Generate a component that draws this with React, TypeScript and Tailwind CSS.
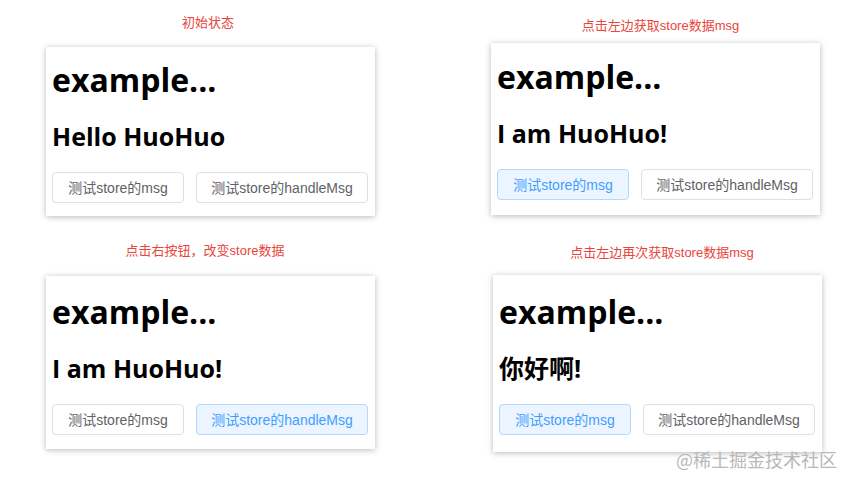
import React from "react";

type PanelProps = {
  label: string;
  msg: string;
  active?: "msg" | "handle";
  wrap: string;
  labelPad: string;
  cardGap: string;
  cardPad: string;
};

function Panel({ label, msg, active, wrap, labelPad, cardGap, cardPad }: PanelProps) {
  const base =
    "h-[31px] rounded-[4px] border text-[14px] leading-none flex items-center justify-center font-['Liberation_Sans','Noto_Sans_CJK_SC',sans-serif]";
  const idle = "bg-white border-[#dcdfe6] text-[#606266]";
  const on = "bg-[#ecf5ff] border-[#b3d8ff] text-[#409eff]";

  return (
    <div className={`flex flex-col ${wrap}`}>
      <p
        className={`text-center text-[13px] leading-[18px] text-[#e8453c] font-['Liberation_Sans','Noto_Sans_CJK_SC',sans-serif] ${labelPad}`}
      >
        {label}
      </p>
      <div className={`w-[329px] bg-white shadow-[0_1px_6px_rgba(0,0,0,0.28)] pl-[6px] ${cardGap} ${cardPad}`}>
        <h1 className="text-[32px] leading-[40px] font-bold text-black font-['Open_Sans','Noto_Sans_CJK_SC',sans-serif]">
          example...
        </h1>
        <h2 className="mt-[21px] text-[25px] leading-[30px] font-bold text-black font-['Open_Sans','Noto_Sans_CJK_SC',sans-serif]">
          {msg}
        </h2>
        <div className="mt-[21px] flex gap-[12px]">
          <button className={`${base} w-[132px] ${active === "msg" ? on : idle}`}>测试store的msg</button>
          <button className={`${base} w-[172px] ${active === "handle" ? on : idle}`}>测试store的handleMsg</button>
        </div>
      </div>
    </div>
  );
}

export default function App() {
  return (
    <div className="relative w-[852px] h-[486px] bg-white overflow-hidden">
      <div className="grid grid-cols-[329px_329px] items-start gap-x-[116px] pl-[46px]">
        <Panel
          label="初始状态"
          msg="Hello HuoHuo"
          wrap="pt-[14px]"
          labelPad="pr-[5px]"
          cardGap="mt-[15px]"
          cardPad="pt-[13px] pb-[13px]"
        />
        <Panel
          label="点击左边获取store数据msg"
          msg="I am HuoHuo!"
          active="msg"
          wrap="pt-[17px]"
          labelPad="pl-[10px]"
          cardGap="mt-[8px]"
          cardPad="pt-[14px] pb-[15px]"
        />
        <Panel
          label="点击右按钮，改变store数据"
          msg="I am HuoHuo!"
          active="handle"
          wrap="pt-[26px]"
          labelPad="pr-[11px]"
          cardGap="mt-[16px]"
          cardPad="pt-[16px] pb-[14px]"
        />
        <Panel
          label="点击左边再次获取store数据msg"
          msg="你好啊!"
          active="msg"
          wrap="pt-[28px] ml-[2px]"
          labelPad="pl-[11px]"
          cardGap="mt-[13px]"
          cardPad="pt-[17px] pb-[17px]"
        />
      </div>

      {/* watermark */}
      <span className="absolute left-[676px] top-[448px] text-[18px] leading-[22px] text-[#b8b8b8] font-['Noto_Sans_CJK_SC',sans-serif]">
        @稀土掘金技术社区
      </span>
    </div>
  );
}
